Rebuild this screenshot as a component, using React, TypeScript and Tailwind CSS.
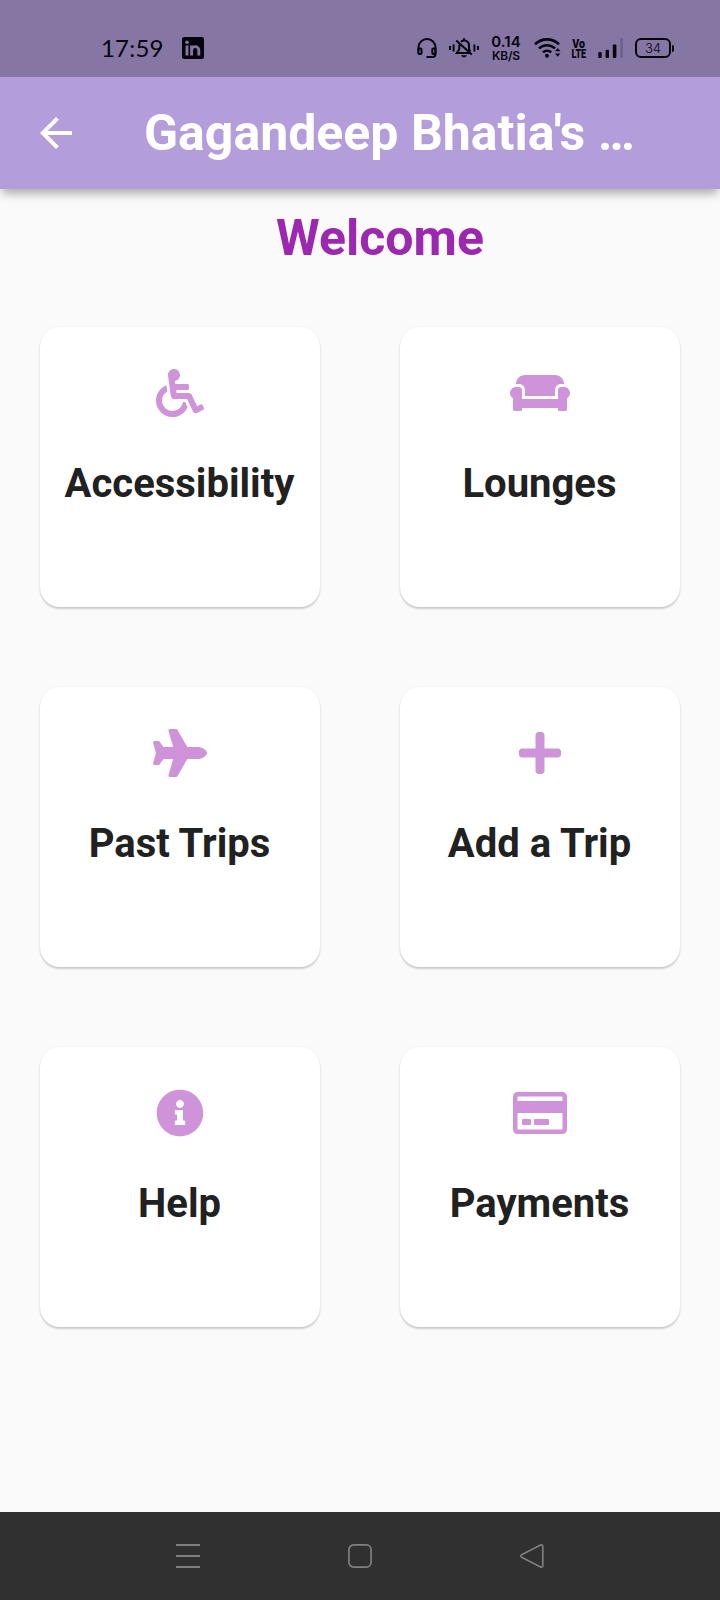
import type { IconType } from "react-icons";
import { FaCouch, FaInfoCircle, FaPlane, FaPlus, FaRegCreditCard, FaWheelchair } from "react-icons/fa";
import { MdArrowBack } from "react-icons/md";

const tiles: { label: string; Icon: IconType; width: string }[] = [
  { label: "Accessibility", Icon: FaWheelchair, width: "w-12" },
  { label: "Lounges", Icon: FaCouch, width: "w-[60px]" },
  { label: "Past Trips", Icon: FaPlane, width: "w-[54px]" },
  { label: "Add a Trip", Icon: FaPlus, width: "w-[42px]" },
  { label: "Help", Icon: FaInfoCircle, width: "w-12" },
  { label: "Payments", Icon: FaRegCreditCard, width: "w-[54px]" },
];

function LinkedInIcon() {
  return (
    <svg className="ml-5 h-[22px] w-[22px]" viewBox="0 0 22 22">
      <rect width="22" height="22" rx="2.2" fill="#07040c" />
      <g stroke="#8676a4" strokeWidth="2.9" fill="none">
        <path d="M5 8.4V18.6M9.6 8.4V18.6M9.6 13.2c0-4.6 7.2-4.8 7.2 0V18.6" />
      </g>
      <circle cx="5" cy="5.2" r="1.8" fill="#8676a4" />
    </svg>
  );
}

function HeadsetIcon() {
  return (
    <svg className="h-5 w-5" viewBox="0 0 20 20" fill="none" stroke="#07040c" strokeWidth="2">
      <path d="M1.5 13V9.5a8.5 8.5 0 0 1 17 0V16a3 3 0 0 1-3 3H9.5" />
      <rect x="1.3" y="10.5" width="3.2" height="5.6" rx="1" />
      <rect x="15.3" y="10.5" width="3.2" height="5.6" rx="1" />
    </svg>
  );
}

function SilentIcon() {
  return (
    <svg className="ml-3 h-5 w-[30px]" viewBox="0 0 30 20" fill="none" stroke="#07040c" strokeWidth="2">
      <path d="M1 8v4M4.6 6.5v7M25.4 6.5v7M29 8v4" />
      <path d="M10.3 6.4v4.8L7.8 15h12.6M12 3.8c3.2-3 8-.7 8 3.4v4l1.4 2.3M15 .3v2M7.2 2.6l15.6 14" />
      <path d="M12 17.2h6l-1.6 2h-2.8z" fill="#07040c" stroke="none" />
    </svg>
  );
}

function WifiIcon() {
  return (
    <svg className="ml-[13px] h-5 w-[27px]" viewBox="0 0 27 20" fill="none" stroke="#07040c" strokeWidth="2.6">
      <path d="M1 6.2C7.8-.3 18.2-.3 25 6.2M5 10.4c4.5-4.2 11.5-4.2 16 0M9 14.4c2.4-2.2 6-2.2 8.2 0" />
      <circle cx="13" cy="17.8" r="2" fill="#07040c" stroke="none" />
      <path d="M21 13.2l2.7-3.2 2.7 3.2zM21 15.6l2.7 3.2 2.7-3.2z" fill="#07040c" stroke="none" />
    </svg>
  );
}

function SignalIcon() {
  return (
    <svg className="ml-3 h-5 w-[26px]" viewBox="0 0 26 20">
      <rect x=".3" y="14" width="3.4" height="6" rx="1" fill="#07040c" />
      <rect x="7.6" y="11.8" width="3.4" height="8.2" rx="1" fill="#07040c" />
      <rect x="14.8" y="6.5" width="3.6" height="13.5" rx="1" fill="#07040c" />
      <rect x="22.2" y="0" width="2.8" height="20" rx="1" fill="#70618b" />
    </svg>
  );
}

function StatusBar() {
  return (
    <header className="flex h-[77px] items-center bg-[#8676a4] pr-[46px] pl-[101px] pt-[19px] text-[#07040c]">
      <time className="w-[61px] font-['Lato',sans-serif] text-[24px] leading-none tracking-[0.2px] whitespace-nowrap">17:59</time>
      <LinkedInIcon />
      <div className="ml-auto flex items-center">
        <HeadsetIcon />
        <SilentIcon />
        <div className="ml-3 flex w-[30px] flex-col items-center pt-px font-['Inter',sans-serif] font-semibold">
          <span className="text-[15px] leading-[14px]">0.14</span>
          <span className="text-[12px] leading-[13px] tracking-[-0.2px]">KB/S</span>
        </div>
        <WifiIcon />
        <div className="ml-[10px] flex w-[15px] flex-col items-center pt-px font-['Roboto',sans-serif] font-black">
          <span className="scale-x-85 text-[12.5px] leading-[11px]">Vo</span>
          <span className="scale-x-75 text-[12px] leading-[10px]">LTE</span>
        </div>
        <SignalIcon />
        <div className="ml-[11px] flex items-center gap-px">
          <div className="flex h-5 w-9 items-center justify-center rounded-[6px] border-2 border-[#07040c] font-['Inter',sans-serif] text-[13px] leading-none font-light">34</div>
          <div className="h-[7px] w-[2px] rounded-r bg-[#07040c]" />
        </div>
      </div>
    </header>
  );
}

function NavigationBar() {
  return (
    <nav className="flex h-[88px] items-center justify-between bg-[#303030] px-[176px] text-[#808080]">
      <svg className="h-6 w-6" viewBox="0 0 24 24" stroke="currentColor" strokeWidth="2">
        <path d="M0 1h24M0 12h24M0 23h24" />
      </svg>
      <svg className="h-6 w-6" viewBox="0 0 24 24" stroke="currentColor" strokeWidth="1.7" fill="none">
        <rect x=".9" y=".9" width="22.2" height="22.2" rx="4.8" />
      </svg>
      <svg className="h-6 w-6" viewBox="0 0 24 24" stroke="currentColor" strokeWidth="1.6" fill="none">
        <path d="M1.6 10.8 20.5 1.1Q22.8.3 22.8 2.6V21.4Q22.8 23.7 20.5 22.9L1.6 13.2Q-.2 12 1.6 10.8Z" />
      </svg>
    </nav>
  );
}

export default function App() {
  return (
    <div className="flex h-[1600px] w-[720px] flex-col overflow-hidden bg-[#fafafa] font-['Roboto',sans-serif]">
      <StatusBar />
      <div className="flex h-28 items-center bg-[#b39ddb] pl-8 text-white shadow-[0_7px_9px_-2px_rgba(0,0,0,0.3)]">
        <button type="button" aria-label="Back">
          <MdArrowBack className="h-12 w-12" />
        </button>
        <h1 className="ml-16 text-[50px] leading-none font-bold whitespace-nowrap">Gagandeep Bhatia's …</h1>
      </div>
      <main className="flex-1">
        <h2 className="pt-5 pl-10 text-center text-[50px] leading-[58px] font-bold text-[#9c27b0]">Welcome</h2>
        <div className="mt-[60px] grid grid-cols-2 gap-20 px-10">
          {tiles.map(({ label, Icon, width }) => (
            <button
              key={label}
              type="button"
              className="flex h-[280px] flex-col items-center rounded-[20px] bg-white pt-[42px] shadow-[0_2px_2px_rgba(0,0,0,0.18),0_0_2px_rgba(0,0,0,0.07)]"
            >
              <Icon className={`h-12 text-[#ce93d8] ${width}`} />
              <span className="mt-[43px] mr-px text-[40px] leading-[47px] font-bold whitespace-nowrap text-[#212121]">{label}</span>
            </button>
          ))}
        </div>
      </main>
      <NavigationBar />
    </div>
  );
}
